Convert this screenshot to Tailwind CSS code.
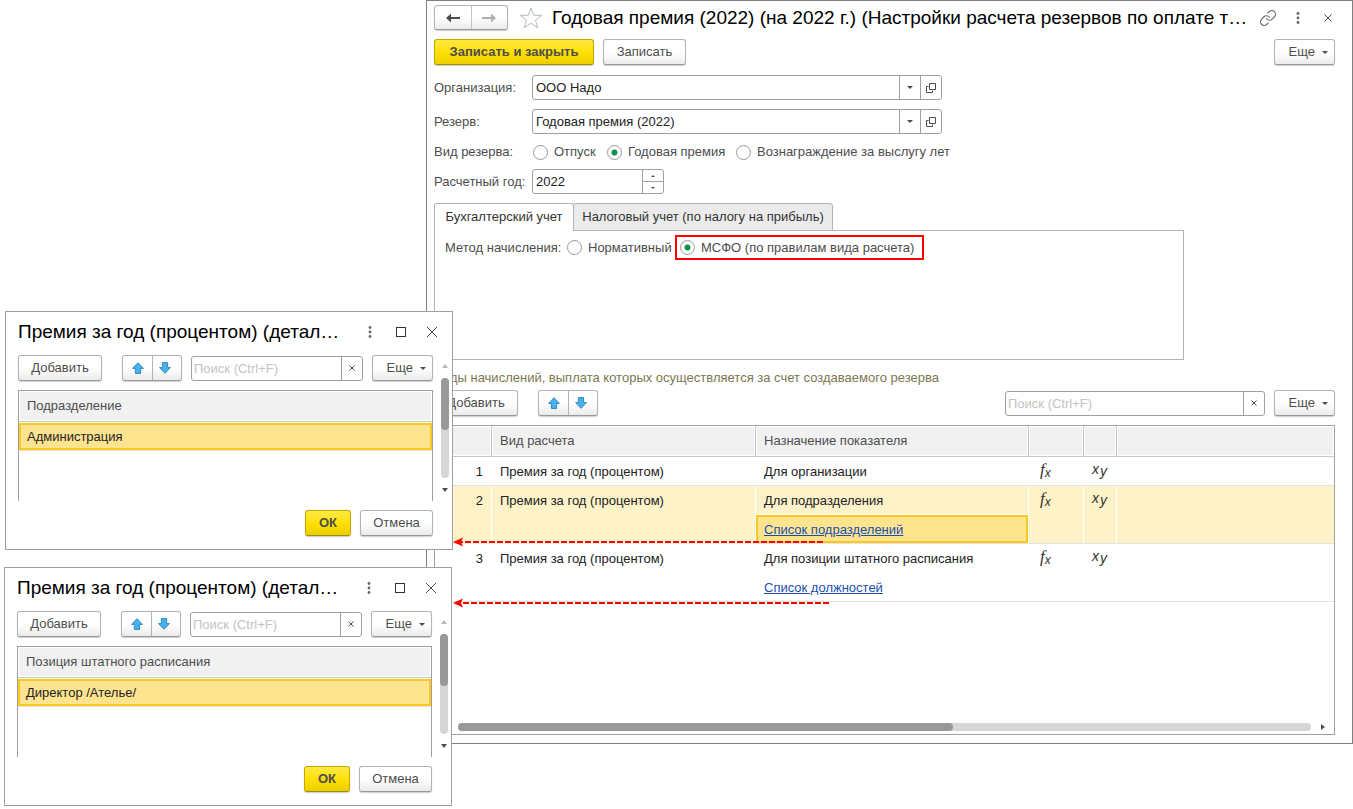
<!DOCTYPE html>
<html lang="ru">
<head>
<meta charset="utf-8">
<title>Настройки расчета резервов</title>
<script src="https://cdn.jsdelivr.net/npm/@tailwindcss/browser@4"></script>
</head>
<body class="relative min-h-screen bg-white font-['Liberation_Sans',Arial,sans-serif] text-[13px] leading-4 text-[#4d4d4d]">

<svg class="hidden" aria-hidden="true">
  <symbol id="up" viewBox="0 0 12 12"><path d="M6 .7 11.4 6.4H8.6V11.4H3.4V6.4H.6Z" fill="#46b1f0" stroke="#3687bb" stroke-width="1"/></symbol>
  <symbol id="down" viewBox="0 0 12 12"><path d="M6 11.3 11.4 5.6H8.6V.6H3.4V5.6H.6Z" fill="#46b1f0" stroke="#3687bb" stroke-width="1"/></symbol>
  <symbol id="caret" viewBox="0 0 6 3"><path d="M0 0H6L3 3Z" fill="#4d4d4d"/></symbol>
  <symbol id="cross" viewBox="0 0 12 12"><path d="M1 1 11 11M11 1 1 11" fill="none" stroke="#4d4d4d"/></symbol>
  <symbol id="smallcross" viewBox="0 0 8 8"><path d="M.5 .5 7.5 7.5M7.5 .5 .5 7.5" fill="none" stroke="#4d4d4d"/></symbol>
  <symbol id="dots" viewBox="0 0 4 12"><g fill="#666"><circle cx="2" cy="1.500" r="1.400"/><circle cx="2" cy="6" r="1.400"/><circle cx="2" cy="10.500" r="1.400"/></g></symbol>
  <symbol id="open" viewBox="0 0 10 10"><path d="M3.500 .5H9.500V6.500H3.500ZM2.500 3.500H.5V9.500H6.500V7.500" fill="none" stroke="#4d4d4d"/></symbol>
</svg>

<main class="ml-[426px] border border-[#808080] pt-1 pr-[17px] pb-2 pl-[7px]">
  <header class="flex h-[25px] items-center">
    <div class="flex h-[25px] w-[74px] shrink-0 rounded-[3px] border border-[#b3b3b3] border-b-[#999] bg-linear-to-b from-white from-50% to-[#ebebeb] shadow-[0_1px_1px_#ccc]">
      <button aria-label="Назад" class="grid flex-1 place-items-center border-r border-[#c4c4c4]"><svg class="h-3 w-[14px]" viewBox="0 0 14 12"><path d="M5 5V1.500L0 6 5 10.500V7H14V5Z" fill="#4d4d4d"/></svg></button>
      <button aria-label="Вперед" class="grid flex-1 place-items-center"><svg class="h-3 w-[14px]" viewBox="0 0 14 12"><path d="M9 5V1.500L14 6 9 10.500V7H0V5Z" fill="#b0b0b0"/></svg></button>
    </div>
    <button aria-label="В избранное" class="ml-[11px] shrink-0"><svg class="h-[22px] w-6" viewBox="0 0 24 22"><path d="M12 1 14.800 8.200 22.800 8.400 16.500 13.200 18.800 20.800 12 16.300 5.200 20.800 7.500 13.200 1.200 8.400 9.200 8.200Z" fill="none" stroke="#b3bac4"/></svg></button>
    <h1 class="ml-[9px] min-w-0 flex-1 truncate text-[19px] leading-6 text-black">Годовая премия (2022) (на 2022 г.) (Настройки расчета резервов по оплате т…</h1>
    <div class="flex shrink-0 items-center">
      <button aria-label="Ссылка"><svg class="size-[18px]" viewBox="0 0 24 24"><path d="M10 13a5 5 0 0 0 7.540.54l3-3a5 5 0 0 0-7.070-7.070l-1.720 1.710M14 11a5 5 0 0 0-7.540-.54l-3 3a5 5 0 0 0 7.070 7.070l1.710-1.710" fill="none" stroke="#666" stroke-width="1.600" stroke-linecap="round"/></svg></button>
      <button aria-label="Меню" class="ml-[19px]"><svg class="h-3 w-1"><use href="#dots"/></svg></button>
      <button aria-label="Закрыть" class="mr-[3px] ml-6"><svg class="h-2 w-2"><use href="#smallcross"/></svg></button>
    </div>
  </header>

  <div class="mt-[9px] flex h-[26px]">
    <button class="w-40 rounded-[3px] border border-[#c4a800] border-b-[#a08a00] bg-linear-to-b from-[#ffe93d] via-[#ffe000] to-[#eccf00] font-bold shadow-[0_1px_1px_#ccc]">Записать и закрыть</button>
    <button class="ml-[9px] w-[83px] rounded-[3px] border border-[#b3b3b3] border-b-[#999] bg-linear-to-b from-white from-50% to-[#ebebeb] shadow-[0_1px_1px_#ccc]">Записать</button>
    <button class="ml-auto flex w-[61px] items-center justify-end gap-[7px] rounded-[3px] border border-[#b3b3b3] border-b-[#999] bg-linear-to-b from-white from-50% to-[#ebebeb] pr-[6px] shadow-[0_1px_1px_#ccc]">Еще<svg class="h-[3px] w-[6px]"><use href="#caret"/></svg></button>
  </div>

  <div class="mt-[10px] flex h-[25px] items-center">
    <label for="org" class="w-[98px] shrink-0">Организация:</label>
    <div class="flex h-[25px] w-[410px] rounded-[3px] border border-[#a0a0a0]">
      <input id="org" value="ООО Надо" class="min-w-0 flex-1 px-[3px] text-[#222] outline-none">
      <button aria-label="Выбрать организацию" class="grid w-[21px] place-items-center border-l border-[#a0a0a0]"><svg class="h-[3px] w-[6px]"><use href="#caret"/></svg></button>
      <button aria-label="Открыть организацию" class="grid w-[21px] place-items-center border-l border-[#a0a0a0]"><svg class="h-[10px] w-[10px]"><use href="#open"/></svg></button>
    </div>
  </div>
  <div class="mt-[9px] flex h-[25px] items-center">
    <label for="res" class="w-[98px] shrink-0">Резерв:</label>
    <div class="flex h-[25px] w-[410px] rounded-[3px] border border-[#a0a0a0]">
      <input id="res" value="Годовая премия (2022)" class="min-w-0 flex-1 px-[3px] text-[#222] outline-none">
      <button aria-label="Выбрать резерв" class="grid w-[21px] place-items-center border-l border-[#a0a0a0]"><svg class="h-[3px] w-[6px]"><use href="#caret"/></svg></button>
      <button aria-label="Открыть резерв" class="grid w-[21px] place-items-center border-l border-[#a0a0a0]"><svg class="h-[10px] w-[10px]"><use href="#open"/></svg></button>
    </div>
  </div>
  <div role="radiogroup" aria-labelledby="kind" class="mt-[10px] flex h-4 items-center">
    <span id="kind" class="w-[99px] shrink-0">Вид резерва:</span>
    <label class="flex w-[74px] items-center gap-[6px] whitespace-nowrap"><input type="radio" name="kind" class="size-[15px] shrink-0 appearance-none rounded-full border border-[#999] checked:bg-[radial-gradient(circle,#009646_27%,transparent_38%)]">Отпуск</label>
    <label class="flex w-[129px] items-center gap-[6px] whitespace-nowrap"><input type="radio" name="kind" checked class="size-[15px] shrink-0 appearance-none rounded-full border border-[#999] checked:bg-[radial-gradient(circle,#009646_27%,transparent_38%)]">Годовая премия</label>
    <label class="flex items-center gap-[6px] whitespace-nowrap"><input type="radio" name="kind" class="size-[15px] shrink-0 appearance-none rounded-full border border-[#999] checked:bg-[radial-gradient(circle,#009646_27%,transparent_38%)]">Вознаграждение за выслугу лет</label>
  </div>
  <div class="mt-[9px] flex h-[25px] items-center">
    <label for="year" class="w-[98px] shrink-0 whitespace-nowrap">Расчетный год:</label>
    <div class="flex h-[25px] w-[132px] rounded-[3px] border border-[#a0a0a0]">
      <input id="year" value="2022" class="min-w-0 flex-1 px-[3px] text-[#222] outline-none">
      <div class="flex w-[21px] flex-col border-l border-[#a0a0a0]">
        <button aria-label="Больше" class="grid flex-1 place-items-center border-b border-[#a0a0a0]"><svg class="h-[2px] w-1 rotate-180"><use href="#caret"/></svg></button>
        <button aria-label="Меньше" class="grid flex-1 place-items-center"><svg class="h-[2px] w-1"><use href="#caret"/></svg></button>
      </div>
    </div>
  </div>

  <div role="tablist" class="mt-[9px] flex h-7 text-[#333]">
    <button role="tab" aria-selected="true" class="z-10 w-[140px] rounded-t-[3px] border border-b-0 border-[#b3b3b3] bg-white pb-px whitespace-nowrap">Бухгалтерский учет</button>
    <button role="tab" aria-selected="false" class="-ml-px w-[260px] rounded-t-[3px] border border-[#b3b3b3] bg-[#ebebeb] whitespace-nowrap">Налоговый учет (по налогу на прибыль)</button>
  </div>
  <section role="tabpanel" class="-mt-px h-[130px] max-w-[750px] border border-[#b3b3b3] pt-1 pl-[10px]">
    <div role="radiogroup" aria-labelledby="method" class="flex h-[25px] items-center">
      <span id="method" class="w-[122px] shrink-0 whitespace-nowrap">Метод начисления:</span>
      <label class="flex w-[108px] items-center gap-[6px] whitespace-nowrap"><input type="radio" name="method" class="size-[15px] shrink-0 appearance-none rounded-full border border-[#999] checked:bg-[radial-gradient(circle,#009646_27%,transparent_38%)]">Нормативный</label>
      <label class="flex h-[25px] w-[249px] items-center gap-[6px] border-2 border-[#ff0000] pl-[3px] whitespace-nowrap"><input type="radio" name="method" checked class="size-[15px] shrink-0 appearance-none rounded-full border border-[#999] checked:bg-[radial-gradient(circle,#009646_27%,transparent_38%)]">МСФО (по правилам вида расчета)</label>
    </div>
  </section>

  <h2 class="mt-[10px] text-[#7d7650]">Виды начислений, выплата которых осуществляется за счет создаваемого резерва</h2>
  <div class="mt-1 flex h-[26px]">
    <button class="w-[84px] rounded-[3px] border border-[#b3b3b3] border-b-[#999] bg-linear-to-b from-white from-50% to-[#ebebeb] shadow-[0_1px_1px_#ccc]">Добавить</button>
    <div class="ml-5 flex w-[60px] rounded-[3px] border border-[#b3b3b3] border-b-[#999] bg-linear-to-b from-white from-50% to-[#ebebeb] shadow-[0_1px_1px_#ccc]">
      <button aria-label="Вверх" class="grid w-[30px] place-items-center border-r border-[#b3b3b3]"><svg class="size-3"><use href="#up"/></svg></button>
      <button aria-label="Вниз" class="grid flex-1 place-items-center pr-1"><svg class="size-3"><use href="#down"/></svg></button>
    </div>
    <div class="mt-px ml-auto flex h-[25px] w-[260px] rounded-[3px] border border-[#a0a0a0]">
      <input aria-label="Поиск" placeholder="Поиск (Ctrl+F)" class="min-w-0 flex-1 px-[2px] outline-none placeholder:text-[#c3c3c3]">
      <button aria-label="Очистить" class="grid w-[21px] place-items-center border-l border-[#a0a0a0] pb-px"><svg class="size-[6px]" viewBox="0 0 6 6"><path d="M.5 .5 5.500 5.500M5.500 .5 .5 5.500" stroke="#4d4d4d"/></svg></button>
    </div>
    <button class="ml-[9px] flex w-[61px] items-center justify-end gap-[7px] rounded-[3px] border border-[#b3b3b3] border-b-[#999] bg-linear-to-b from-white from-50% to-[#ebebeb] pr-[6px] shadow-[0_1px_1px_#ccc]">Еще<svg class="h-[3px] w-[6px]"><use href="#caret"/></svg></button>
  </div>

  <div class="mt-[9px] flex min-h-[310px] flex-col border border-[#a0a0a0]">
    <table class="w-full table-fixed border-separate border-spacing-0 text-left text-[#222]">
      <colgroup><col class="w-[57px]"><col class="w-[264px]"><col class="w-[273px]"><col class="w-[55px]"><col class="w-[33px]"><col></colgroup>
      <thead>
        <tr class="h-[31px] text-[#4d4d4d]">
          <th class="border-r border-b border-[#c8c8c8] bg-[#f1f1f1] shadow-[inset_0_0_0_1px_#fff]"></th>
          <th class="border-r border-b border-[#c8c8c8] bg-[#f1f1f1] pl-2 font-normal shadow-[inset_0_0_0_1px_#fff]">Вид расчета</th>
          <th class="border-r border-b border-[#c8c8c8] bg-[#f1f1f1] pl-2 font-normal shadow-[inset_0_0_0_1px_#fff]">Назначение показателя</th>
          <th class="border-r border-b border-[#c8c8c8] bg-[#f1f1f1] shadow-[inset_0_0_0_1px_#fff]"></th>
          <th class="border-r border-b border-[#c8c8c8] bg-[#f1f1f1] shadow-[inset_0_0_0_1px_#fff]"></th>
          <th class="border-b border-[#c8c8c8] bg-[#f1f1f1] shadow-[inset_0_0_0_1px_#fff]"></th>
        </tr>
      </thead>
      <tbody class="align-top">
        <tr class="h-[29px]">
          <td class="border-b border-[#e3e3e3] pt-[7px] pr-[9px] text-right">1</td>
          <td class="border-b border-[#e3e3e3] pt-[7px] pl-2">Премия за год (процентом)</td>
          <td class="border-b border-[#e3e3e3] pt-[7px] pl-2">Для организации</td>
          <td class="border-b border-[#e3e3e3] p-0 pt-[5px] pl-[11px] text-[#333]"><div class="flex font-['Liberation_Serif',serif] text-[17px] leading-4 italic">f<span class="pt-[3px] font-['Liberation_Sans',sans-serif] text-[12px] leading-4">x</span></div></td>
          <td class="border-b border-[#e3e3e3] p-0 pt-1 pl-2 text-[#333]"><div class="flex gap-px font-['Liberation_Sans',sans-serif] text-[14px] leading-4 italic">x<span class="pt-[2px]">y</span></div></td>
          <td class="border-b border-[#e3e3e3]"></td>
        </tr>
        <tr class="h-[58px]">
          <td class="border-r border-b border-r-white border-b-[#e3e3e3] bg-[#fef2c8] pt-[7px] pr-2 text-right">2</td>
          <td class="border-r border-b border-r-white border-b-[#e3e3e3] bg-[#fef2c8] pt-[7px] pl-2">Премия за год (процентом)</td>
          <td class="border-r border-b border-r-white border-b-[#e3e3e3] bg-[#fef2c8] p-0">
            <div class="h-[29px] border-b border-white pt-[7px] pl-2">Для подразделения</div>
            <div class="h-7 border-2 border-[#fac81e] bg-[#ffe48f] pt-[5px] pl-[6px]"><a href="#" class="text-[#1a4fae] underline">Список подразделений</a></div>
          </td>
          <td class="border-r border-b border-r-white border-b-[#e3e3e3] bg-[#fef2c8] p-0 pt-[5px] pl-[11px] text-[#333]"><div class="flex font-['Liberation_Serif',serif] text-[17px] leading-4 italic">f<span class="pt-[3px] font-['Liberation_Sans',sans-serif] text-[12px] leading-4">x</span></div></td>
          <td class="border-r border-b border-r-white border-b-[#e3e3e3] bg-[#fef2c8] p-0 pt-1 pl-2 text-[#333]"><div class="flex gap-px font-['Liberation_Sans',sans-serif] text-[14px] leading-4 italic">x<span class="pt-[2px]">y</span></div></td>
          <td class="border-b border-[#e3e3e3] bg-[#fef2c8]"></td>
        </tr>
        <tr class="h-[58px]">
          <td class="border-b border-[#e3e3e3] pt-[7px] pr-[9px] text-right">3</td>
          <td class="border-b border-[#e3e3e3] pt-[7px] pl-2">Премия за год (процентом)</td>
          <td class="border-b border-[#e3e3e3] p-0">
            <div class="h-[29px] pt-[7px] pl-2">Для позиции штатного расписания</div>
            <div class="h-7 pt-[7px] pl-2"><a href="#" class="text-[#1a4fae] underline">Список должностей</a></div>
          </td>
          <td class="border-b border-[#e3e3e3] p-0 pt-[5px] pl-[11px] text-[#333]"><div class="flex font-['Liberation_Serif',serif] text-[17px] leading-4 italic">f<span class="pt-[3px] font-['Liberation_Sans',sans-serif] text-[12px] leading-4">x</span></div></td>
          <td class="border-b border-[#e3e3e3] p-0 pt-1 pl-2 text-[#333]"><div class="flex gap-px font-['Liberation_Sans',sans-serif] text-[14px] leading-4 italic">x<span class="pt-[2px]">y</span></div></td>
          <td class="border-b border-[#e3e3e3]"></td>
        </tr>
      </tbody>
    </table>
    <div class="mt-auto mb-[3px] ml-[23px] flex items-center pr-[9px]">
      <div class="h-2 flex-1 rounded-full bg-[#d6d6d6]"><div class="h-2 w-[58%] rounded-full bg-[#999]"></div></div>
      <svg class="ml-[10px] h-[6px] w-1" viewBox="0 0 4 6"><path d="M0 0 4 3 0 6Z" fill="#4d4d4d"/></svg>
    </div>
  </div>
</main>

<section role="dialog" aria-labelledby="t1" class="absolute top-[311px] left-[5px] w-[448px] border border-[#a0a0a0] bg-white pt-2 pb-[13px] pl-3">
  <div class="flex h-6 items-center pr-[14px]">
    <h2 id="t1" class="w-[350px] text-[19px] leading-6 whitespace-nowrap text-black">Премия за год (процентом) (детал…</h2>
    <button aria-label="Меню"><svg class="h-3 w-1"><use href="#dots"/></svg></button>
    <button aria-label="Развернуть" class="ml-auto size-[10px] border border-[#333]"></button>
    <button aria-label="Закрыть" class="ml-5"><svg class="size-3"><use href="#cross"/></svg></button>
  </div>
  <div class="mt-[11px] flex">
    <div class="w-[415px]">
      <div class="flex h-[26px]">
        <button class="w-[84px] rounded-[3px] border border-[#b3b3b3] border-b-[#999] bg-linear-to-b from-white from-50% to-[#ebebeb] shadow-[0_1px_1px_#ccc]">Добавить</button>
        <div class="ml-5 flex w-[60px] rounded-[3px] border border-[#b3b3b3] border-b-[#999] bg-linear-to-b from-white from-50% to-[#ebebeb] shadow-[0_1px_1px_#ccc]">
          <button aria-label="Вверх" class="grid w-[30px] place-items-center border-r border-[#b3b3b3]"><svg class="size-3"><use href="#up"/></svg></button>
          <button aria-label="Вниз" class="grid flex-1 place-items-center pr-1"><svg class="size-3"><use href="#down"/></svg></button>
        </div>
        <div class="mt-px ml-[9px] flex h-[25px] w-[172px] rounded-[3px] border border-[#a0a0a0]">
          <input aria-label="Поиск" placeholder="Поиск (Ctrl+F)" class="min-w-0 flex-1 px-[2px] outline-none placeholder:text-[#c3c3c3]">
          <button aria-label="Очистить" class="grid w-[21px] place-items-center border-l border-[#a0a0a0] pb-px"><svg class="size-[6px]" viewBox="0 0 6 6"><path d="M.5 .5 5.500 5.500M5.500 .5 .5 5.500" stroke="#4d4d4d"/></svg></button>
        </div>
        <button class="ml-auto flex w-[61px] items-center justify-end gap-[7px] rounded-[3px] border border-[#b3b3b3] border-b-[#999] bg-linear-to-b from-white from-50% to-[#ebebeb] pr-[6px] shadow-[0_1px_1px_#ccc]">Еще<svg class="h-[3px] w-[6px]"><use href="#caret"/></svg></button>
      </div>
      <div class="mt-[9px] h-[111px] border border-b-0 border-[#a0a0a0]">
        <table class="w-full border-separate border-spacing-0 text-left">
          <thead><tr class="h-[31px]"><th class="border-b border-[#c8c8c8] bg-[#f1f1f1] pl-2 font-normal shadow-[inset_0_0_0_1px_#fff]">Подразделение</th></tr></thead>
          <tbody><tr><td class="border-b border-[#e3e3e3] p-0 pt-px text-[#222]"><div class="h-[27px] border-2 border-[#fac81e] bg-[#ffe48f] pt-1 pl-[6px]">Администрация</div></td></tr></tbody>
        </table>
      </div>
    </div>
    <div class="ml-2 flex w-2 flex-col items-center pt-[9px]" aria-hidden="true">
      <svg class="h-1 w-[6px]" viewBox="0 0 6 4"><path d="M0 4 3 0 6 4Z" fill="#b8b8b8"/></svg>
      <div class="mt-[10px] h-[100px] w-2 rounded-full bg-[#d6d6d6]"><div class="h-[52px] rounded-full bg-[#999]"></div></div>
      <svg class="mt-[10px] h-1 w-[6px]" viewBox="0 0 6 4"><path d="M0 0 3 4 6 0Z" fill="#4d4d4d"/></svg>
    </div>
  </div>
  <div class="mt-[9px] flex h-[26px] justify-end gap-[9px] pr-[19px]">
    <button class="w-[46px] rounded-[3px] border border-[#c4a800] border-b-[#a08a00] bg-linear-to-b from-[#ffe93d] via-[#ffe000] to-[#eccf00] font-bold shadow-[0_1px_1px_#ccc]">ОК</button>
    <button class="w-[73px] rounded-[3px] border border-[#b3b3b3] border-b-[#999] bg-linear-to-b from-white from-50% to-[#ebebeb] shadow-[0_1px_1px_#ccc]">Отмена</button>
  </div>
</section>

<section role="dialog" aria-labelledby="t2" class="absolute top-[567px] left-1 w-[448px] border border-[#a0a0a0] bg-white pt-2 pb-[13px] pl-3">
  <div class="flex h-6 items-center pr-[14px]">
    <h2 id="t2" class="w-[350px] text-[19px] leading-6 whitespace-nowrap text-black">Премия за год (процентом) (детал…</h2>
    <button aria-label="Меню"><svg class="h-3 w-1"><use href="#dots"/></svg></button>
    <button aria-label="Развернуть" class="ml-auto size-[10px] border border-[#333]"></button>
    <button aria-label="Закрыть" class="ml-5"><svg class="size-3"><use href="#cross"/></svg></button>
  </div>
  <div class="mt-[11px] flex">
    <div class="w-[415px]">
      <div class="flex h-[26px]">
        <button class="w-[84px] rounded-[3px] border border-[#b3b3b3] border-b-[#999] bg-linear-to-b from-white from-50% to-[#ebebeb] shadow-[0_1px_1px_#ccc]">Добавить</button>
        <div class="ml-5 flex w-[60px] rounded-[3px] border border-[#b3b3b3] border-b-[#999] bg-linear-to-b from-white from-50% to-[#ebebeb] shadow-[0_1px_1px_#ccc]">
          <button aria-label="Вверх" class="grid w-[30px] place-items-center border-r border-[#b3b3b3]"><svg class="size-3"><use href="#up"/></svg></button>
          <button aria-label="Вниз" class="grid flex-1 place-items-center pr-1"><svg class="size-3"><use href="#down"/></svg></button>
        </div>
        <div class="mt-px ml-[9px] flex h-[25px] w-[172px] rounded-[3px] border border-[#a0a0a0]">
          <input aria-label="Поиск" placeholder="Поиск (Ctrl+F)" class="min-w-0 flex-1 px-[2px] outline-none placeholder:text-[#c3c3c3]">
          <button aria-label="Очистить" class="grid w-[21px] place-items-center border-l border-[#a0a0a0] pb-px"><svg class="size-[6px]" viewBox="0 0 6 6"><path d="M.5 .5 5.500 5.500M5.500 .5 .5 5.500" stroke="#4d4d4d"/></svg></button>
        </div>
        <button class="ml-auto flex w-[61px] items-center justify-end gap-[7px] rounded-[3px] border border-[#b3b3b3] border-b-[#999] bg-linear-to-b from-white from-50% to-[#ebebeb] pr-[6px] shadow-[0_1px_1px_#ccc]">Еще<svg class="h-[3px] w-[6px]"><use href="#caret"/></svg></button>
      </div>
      <div class="mt-[9px] h-[111px] border border-b-0 border-[#a0a0a0]">
        <table class="w-full border-separate border-spacing-0 text-left">
          <thead><tr class="h-[31px]"><th class="border-b border-[#c8c8c8] bg-[#f1f1f1] pl-2 font-normal shadow-[inset_0_0_0_1px_#fff]">Позиция штатного расписания</th></tr></thead>
          <tbody><tr><td class="border-b border-[#e3e3e3] p-0 pt-px text-[#222]"><div class="h-[27px] border-2 border-[#fac81e] bg-[#ffe48f] pt-1 pl-[6px]">Директор /Ателье/</div></td></tr></tbody>
        </table>
      </div>
    </div>
    <div class="ml-2 flex w-2 flex-col items-center pt-[9px]" aria-hidden="true">
      <svg class="h-1 w-[6px]" viewBox="0 0 6 4"><path d="M0 4 3 0 6 4Z" fill="#b8b8b8"/></svg>
      <div class="mt-[10px] h-[100px] w-2 rounded-full bg-[#d6d6d6]"><div class="h-[52px] rounded-full bg-[#999]"></div></div>
      <svg class="mt-[10px] h-1 w-[6px]" viewBox="0 0 6 4"><path d="M0 0 3 4 6 0Z" fill="#4d4d4d"/></svg>
    </div>
  </div>
  <div class="mt-[9px] flex h-[26px] justify-end gap-[9px] pr-[19px]">
    <button class="w-[46px] rounded-[3px] border border-[#c4a800] border-b-[#a08a00] bg-linear-to-b from-[#ffe93d] via-[#ffe000] to-[#eccf00] font-bold shadow-[0_1px_1px_#ccc]">ОК</button>
    <button class="w-[73px] rounded-[3px] border border-[#b3b3b3] border-b-[#999] bg-linear-to-b from-white from-50% to-[#ebebeb] shadow-[0_1px_1px_#ccc]">Отмена</button>
  </div>
</section>

<svg class="pointer-events-none absolute top-[537px] left-[453px] h-[10px] w-[370px]" viewBox="0 0 370 10" aria-hidden="true"><path d="M370 5H6" stroke="#f00" stroke-width="2" stroke-dasharray="6 2"/><path d="M0 5 10 .5 8 5 10 9.500Z" fill="#f00"/></svg>
<svg class="pointer-events-none absolute top-[598px] left-[453px] h-[10px] w-[376px]" viewBox="0 0 376 10" aria-hidden="true"><path d="M376 5H6" stroke="#f00" stroke-width="2" stroke-dasharray="6 2"/><path d="M0 5 10 .5 8 5 10 9.500Z" fill="#f00"/></svg>
</body>
</html>
